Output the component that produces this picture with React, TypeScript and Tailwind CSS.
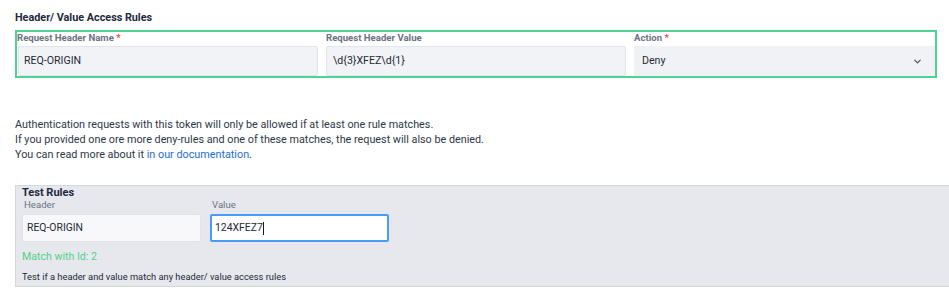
import React from "react";
import { ChevronDown } from "lucide-react";

export default function App() {
  return (
    <div
      className="w-[949px] h-[289px] overflow-hidden bg-white pl-[15px] text-[#1f2937]"
      style={{ fontFamily: "Roboto, 'Noto Sans', sans-serif" }}
    >
      <div className="pt-[11px] text-[10.8px] leading-[14px] font-bold text-[#1e293b]">
        Header/ Value Access Rules
      </div>
      <div className="mt-[5px] w-[922px] border-2 border-[#4fd394] px-px">
        <div className="grid grid-cols-[300px_300px_301px] gap-x-[8px]">
          <div className="flex flex-col">
            <div className="h-[12px] leading-[12px] text-[9.6px] font-bold text-[#6b7280] -ml-px">
              Request Header Name <span className="text-[#ef4444]">*</span>
            </div>
            <div className="mt-[2px] h-[30px] border border-[#e2e5ea] bg-[#f2f3f6] rounded-[2px] flex items-center pl-[5px] text-[10.6px] text-[#1f2937]">
              REQ-ORIGIN
            </div>
          </div>
          <div className="flex flex-col">
            <div className="h-[12px] leading-[12px] text-[9.6px] font-bold text-[#6b7280]">
              Request Header Value
            </div>
            <div className="mt-[2px] h-[30px] border border-[#e2e5ea] bg-[#f2f3f6] rounded-[2px] flex items-center pl-[6px] text-[10.6px] text-[#1f2937]">
              {"\\d{3}XFEZ\\d{1}"}
            </div>
          </div>
          <div className="flex flex-col">
            <div className="h-[12px] leading-[12px] text-[9.6px] font-bold text-[#6b7280]">
              Action <span className="text-[#ef4444]">*</span>
            </div>
            <div className="mt-[2px] h-[30px] bg-[#f1f2f5] flex items-center justify-between pl-[8px] pr-[12px] text-[10.6px] text-[#1f2937]">
              <span>Deny</span>
              <ChevronDown size={11} strokeWidth={2.75} className="text-[#4b5563]" />
            </div>
          </div>
        </div>
      </div>

      <div className="mt-[39px] text-[10.8px] leading-[15px] text-[#2d3748]">
        <div>Authentication requests with this token will only be allowed if at least one rule matches.</div>
        <div>If you provided one ore more deny-rules and one of these matches, the request will also be denied.</div>
        <div>
          You can read more about it <span className="text-[#1a6fd1]">in our documentation</span>.
        </div>
      </div>

      <div className="mt-[23px] w-[960px] border border-[#d3d6dc] bg-[#e7e8ee] pl-[6px] pt-px pb-[3px]">
        <div className="text-[11px] leading-[12px] font-bold text-[#1e293b]">Test Rules</div>
        <div className="flex gap-x-[9px]">
          <div className="flex flex-col w-[179px]">
            <div className="h-[11px] leading-[11px] text-[9.6px] text-[#6b7280] pl-[2px]">Header</div>
            <div className="mt-[4px] h-[28px] border border-[#e1e3e8] bg-[#f8f8fa] rounded-[2px] flex items-center pl-[4px] text-[10.4px] text-[#1f2937]">
              REQ-ORIGIN
            </div>
          </div>
          <div className="flex flex-col w-[179px]">
            <div className="h-[11px] leading-[11px] text-[9.6px] text-[#6b7280] pl-[2px]">Value</div>
            <div className="mt-[4px] h-[28px] border-2 border-[#4a9bff] bg-white rounded-[2px] flex items-center pl-[3px] text-[10.4px] text-[#1f2937]">
              124XFEZ7<span className="inline-block w-px h-[13px] bg-[#111827]" />
            </div>
          </div>
        </div>
        <div className="mt-[9px] text-[10.6px] leading-[12px] text-[#4fd18b]">Match with Id: 2</div>
        <div className="mt-[8px] text-[9.3px] leading-[12px] text-[#1f2937]">
          Test if a header and value match any header/ value access rules
        </div>
      </div>
    </div>
  );
}
